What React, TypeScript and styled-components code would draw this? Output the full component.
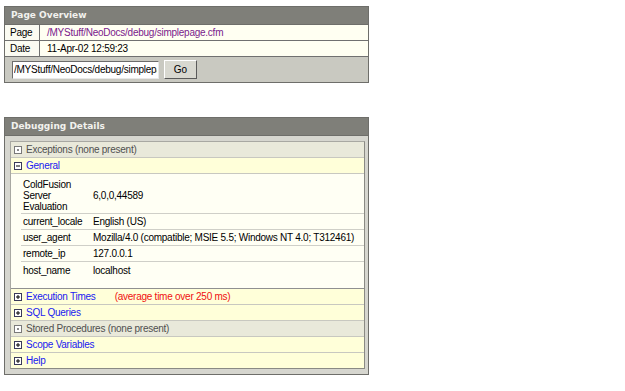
import styled, { createGlobalStyle } from 'styled-components';

const GlobalStyle = createGlobalStyle`
  body {
    margin: 0;
    background: #ffffff;
    font-family: "Liberation Sans", Arial, sans-serif;
    font-size: 10px;
    letter-spacing: -0.25px;
    color: #000000;
  }
`;

const pageRows = [
    { label: 'Page', value: '/MYStuff/NeoDocs/debug/simplepage.cfm', link: true },
    { label: 'Date', value: '11-Apr-02 12:59:23', link: false },
];

const generalRows = [
    { label: 'ColdFusion Server Evaluation', value: '6,0,0,44589' },
    { label: 'current_locale', value: 'English (US)' },
    { label: 'user_agent', value: 'Mozilla/4.0 (compatible; MSIE 5.5; Windows NT 4.0; T312461)' },
    { label: 'remote_ip', value: '127.0.0.1' },
    { label: 'host_name', value: 'localhost' },
];

type Toggle = 'plus' | 'minus' | 'none';

const ToggleIcon = ({ kind }: { kind: Toggle }) => (
    <svg width="8" height="8" viewBox="0 0 8 8">
        <rect x="0.5" y="0.5" width="7" height="7" fill="#ffffff" stroke={kind === 'none' ? '#7a7a7a' : '#3a3a5a'} />
        {kind === 'none' && <rect x="3" y="3" width="2" height="2" fill="#8a8a8a" />}
        {kind !== 'none' && <line x1="2" y1="4" x2="6" y2="4" stroke="#000" />}
        {kind === 'plus' && <line x1="4" y1="2" x2="4" y2="6" stroke="#000" />}
    </svg>
);

const App = () => {
    return (
        <>
            <GlobalStyle/>
            <Page>
                <Panel>
                    <PanelHeader>Page Overview</PanelHeader>
                    {pageRows.map((row) => (
                        <InfoRow key={row.label}>
                            <InfoLabel>{row.label}</InfoLabel>
                            <InfoValue $link={row.link}>{row.value}</InfoValue>
                        </InfoRow>
                    ))}
                    <GoForm>
                        <UrlInput defaultValue="/MYStuff/NeoDocs/debug/simplepage.cfm"/>
                        <GoButton>Go</GoButton>
                    </GoForm>
                </Panel>

                <Panel>
                    <PanelHeader>Debugging Details</PanelHeader>
                    <PanelBody>
                        <Sections>
                            <Section $tone="muted">
                                <ToggleIcon kind="none"/>
                                <SectionTitle $tone="muted">Exceptions (none present)</SectionTitle>
                            </Section>
                            <Section $tone="open">
                                <ToggleIcon kind="minus"/>
                                <SectionTitle $tone="open">General</SectionTitle>
                            </Section>
                            <GeneralTable>
                                {generalRows.map((row) => (
                                    <GeneralRow key={row.label}>
                                        <GeneralLabel>{row.label}</GeneralLabel>
                                        <span>{row.value}</span>
                                    </GeneralRow>
                                ))}
                            </GeneralTable>
                            <Section $tone="open">
                                <ToggleIcon kind="plus"/>
                                <SectionTitle $tone="open">Execution Times</SectionTitle>
                                <Warning>(average time over 250 ms)</Warning>
                            </Section>
                            <Section $tone="open">
                                <ToggleIcon kind="plus"/>
                                <SectionTitle $tone="open">SQL Queries</SectionTitle>
                            </Section>
                            <Section $tone="muted">
                                <ToggleIcon kind="none"/>
                                <SectionTitle $tone="muted">Stored Procedures (none present)</SectionTitle>
                            </Section>
                            <Section $tone="open">
                                <ToggleIcon kind="plus"/>
                                <SectionTitle $tone="open">Scope Variables</SectionTitle>
                            </Section>
                            <Section $tone="open" $last>
                                <ToggleIcon kind="plus"/>
                                <SectionTitle $tone="open">Help</SectionTitle>
                            </Section>
                        </Sections>
                    </PanelBody>
                </Panel>
            </Page>
        </>
    );
};

const Page = styled.div`
  display: flex;
  flex-direction: column;
  gap: 34px;
  padding: 6px 0 0 4px;
`;

const Panel = styled.div`
  width: 363px;
  border: 1px solid #6e6e6a;
  background: #fffff2;
`;

const PanelHeader = styled.div`
  height: 17px;
  line-height: 17px;
  padding-left: 6px;
  background: #7f7f79;
  color: #f2f2ee;
  font-family: "DejaVu Sans", Verdana, sans-serif;
  font-size: 9px;
  letter-spacing: 0;
  font-weight: bold;
  border-bottom: 1px solid #6e6e6a;
`;

const InfoRow = styled.div`
  display: grid;
  grid-template-columns: 35px 1fr;
  height: 15px;
  line-height: 15px;
  border-bottom: 1px solid #707070;
`;

const InfoLabel = styled.div`
  padding-left: 5px;
  background: #fbfbf2;
  border-right: 1px solid #707070;
`;

const InfoValue = styled.div<{ $link?: boolean }>`
  padding-left: 7px;
  background: #fffff2;
  color: ${(p) => (p.$link ? '#7a1a8c' : '#000000')};
`;

const GoForm = styled.div`
  display: flex;
  align-items: center;
  gap: 5px;
  height: 25px;
  padding-left: 7px;
  background: #c9c9c1;
`;

const UrlInput = styled.input`
  box-sizing: border-box;
  width: 147px;
  height: 18px;
  padding: 0 1px;
  font-family: "Liberation Sans", Arial, sans-serif;
  font-size: 10px;
  letter-spacing: -0.25px;
  border: 1px solid;
  border-color: #6c6c6c #e8e8e8 #e8e8e8 #6c6c6c;
  background: #ffffff;
  outline: none;
`;

const GoButton = styled.button`
  box-sizing: border-box;
  width: 33px;
  height: 19px;
  padding: 0;
  font-family: "Liberation Sans", Arial, sans-serif;
  font-size: 10px;
  color: #000000;
  background: #d8d8d0;
  border: 1px solid;
  border-color: #ffffff #5a5a5a #5a5a5a #ffffff;
`;

const PanelBody = styled.div`
  padding: 5px 3px 5px 5px;
  background: #d6d6cf;
`;

const Sections = styled.div`
  display: flex;
  flex-direction: column;
  border: 1px solid;
  border-color: #a8a8a2 #8a8a84 #8a8a84 #a8a8a2;
  background: #fffff4;
`;

const Section = styled.div<{ $tone: 'muted' | 'open'; $last?: boolean }>`
  display: flex;
  align-items: center;
  gap: 4px;
  height: 15px;
  padding-left: 3px;
  background: ${(p) => (p.$tone === 'muted' ? '#e9e9da' : '#ffffd9')};
  border-bottom: ${(p) => (p.$last ? 'none' : '1px solid #c8c8c0')};
`;

const SectionTitle = styled.span<{ $tone: 'muted' | 'open' }>`
  color: ${(p) => (p.$tone === 'muted' ? '#505050' : '#2020f0')};
`;

const Warning = styled.span`
  margin-left: 15px;
  color: #f01010;
`;

const GeneralTable = styled.div`
  display: flex;
  flex-direction: column;
  padding: 4px 0 10px 10px;
  border-bottom: 1px solid #909090;
`;

const GeneralRow = styled.div`
  box-sizing: border-box;
  display: grid;
  grid-template-columns: 70px 1fr;
  align-items: center;
  min-height: 16px;
  padding: 1px 0 1px 2px;
  line-height: 11px;
  border-bottom: 1px solid #cfcfc8;

  &:last-child {
    border-bottom: none;
  }
`;

const GeneralLabel = styled.span`
  padding-right: 4px;
`;

export default App;
